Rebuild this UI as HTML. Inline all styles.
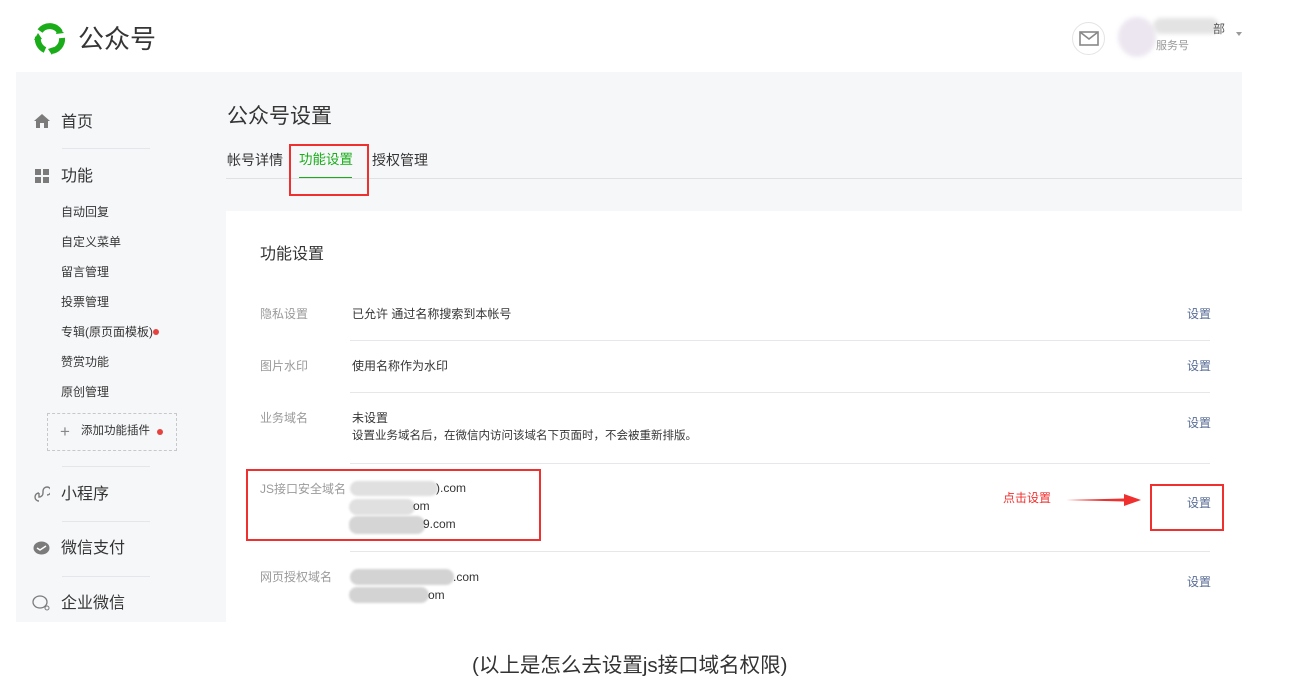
<!DOCTYPE html>
<html><head><meta charset="utf-8">
<style>
*{margin:0;padding:0;box-sizing:border-box}
body{width:1299px;height:683px;background:#fff;position:relative;overflow:hidden;font-family:"Liberation Sans","Noto Sans CJK SC",sans-serif;color:#353535;line-height:1.2}
.a{position:absolute}
.gray{left:16px;top:72px;width:1226px;height:550px;background:#f6f7f9}
.card{left:226px;top:211px;width:1016px;height:411px;background:#fff}
.nav{font-size:16px;color:#353535}
.sub{font-size:12px;color:#353535}
.sep{height:1px;background:#e4e6eb}
.lab{font-size:12px;color:#9a9a9a}
.val{font-size:12px;color:#353535}
.set{font-size:12px;color:#576b95}
.hl{height:1px;background:#e7e7eb;left:350px;width:860px}
.blob{background:#e0e0e0;border-radius:8px;filter:blur(1px)}
.red{border:2px solid #f0302e}
</style></head><body>
<svg class="a" style="left:31px;top:21px" width="38" height="36" viewBox="0 0 38 36">
<g fill="none" stroke="#1aad19" stroke-width="6">
<path d="M9 10A12 12 0 0 1 29 11"/>
<path d="M31 17A12 12 0 0 1 20 30"/>
<path d="M14 29A12 12 0 0 1 7 16"/>
</g>
<path d="M27 6l6 6-8 1z" fill="#1aad19"/>
<path d="M23 26l-2 8-4-6z" fill="#1aad19"/>
<path d="M3 19l4-7 4 6z" fill="#1aad19"/>
</svg>
<div class="a" style="left:78px;top:24px;font-size:26px;color:#353535">公众号</div>
<div class="a" style="left:1072px;top:22px;width:33px;height:33px;border:1px solid #e4e4e4;border-radius:50%"></div>
<svg class="a" style="left:1079px;top:31px" width="20" height="15"><rect x="1" y="1" width="18" height="13" fill="none" stroke="#888" stroke-width="1.6"/><path d="M1 1l9 7 9-7" fill="none" stroke="#888" stroke-width="1.6"/></svg>
<div class="a" style="left:1118px;top:17px;width:38px;height:40px;border-radius:50%;background:#ece6f0;filter:blur(2px)"></div>
<div class="a" style="left:1153px;top:18px;width:66px;height:16px;background:#e3e3e3;border-radius:8px;filter:blur(2px)"></div>
<div class="a" style="left:1213px;top:22px;font-size:12px;color:#555">部</div>
<div class="a" style="left:1156px;top:40px;font-size:11px;color:#999">服务号</div>
<div class="a" style="left:1236px;top:32px;border:3px solid transparent;border-top:4px solid #999"></div>

<div class="a gray"></div>
<svg class="a" style="left:33px;top:113px" width="18" height="16"><path d="M9 1L1 8h2v7h4v-5h4v5h4V8h2z" fill="#7b7b7b"/></svg>
<div class="a nav" style="left:61px;top:113px">首页</div>
<div class="a sep" style="top:148px;left:62px;width:88px"></div>
<svg class="a" style="left:34px;top:168px" width="16" height="16"><rect x="1" y="1" width="6" height="6" fill="#7b7b7b"/><rect x="9" y="1" width="6" height="6" fill="#7b7b7b"/><rect x="1" y="9" width="6" height="6" fill="#7b7b7b"/><rect x="9" y="9" width="6" height="6" fill="#7b7b7b"/></svg>
<div class="a nav" style="left:61px;top:167px">功能</div>
<div class="a sub" style="left:61px;top:205px">自动回复</div>
<div class="a sub" style="left:61px;top:235px">自定义菜单</div>
<div class="a sub" style="left:61px;top:265px">留言管理</div>
<div class="a sub" style="left:61px;top:295px">投票管理</div>
<div class="a sub" style="left:61px;top:325px">专辑(原页面模板)</div>
<div class="a" style="left:153px;top:329px;width:6px;height:6px;border-radius:50%;background:#e64340"></div>
<div class="a sub" style="left:61px;top:355px">赞赏功能</div>
<div class="a sub" style="left:61px;top:385px">原创管理</div>
<div class="a" style="left:47px;top:413px;width:130px;height:38px;border:1px dashed #c8c8c8"></div>
<div class="a" style="left:60px;top:422px;font-size:17px;color:#888;font-weight:300">+</div>
<div class="a sub" style="left:81px;top:425px;font-size:11.5px">添加功能插件</div>
<div class="a" style="left:157px;top:429px;width:6px;height:6px;border-radius:50%;background:#e64340"></div>
<div class="a sep" style="top:466px;left:62px;width:88px"></div>
<svg class="a" style="left:33px;top:486px" width="17" height="16"><path d="M6 15a4 4 0 1 1 0-8M6 7v4a4 4 0 0 0 4-4V5a4 4 0 1 1 4 4" fill="none" stroke="#7b7b7b" stroke-width="1.4"/></svg>
<div class="a nav" style="left:61px;top:485px">小程序</div>
<div class="a sep" style="top:521px;left:62px;width:88px"></div>
<svg class="a" style="left:33px;top:541px" width="17" height="14"><ellipse cx="8.5" cy="7" rx="8" ry="6.5" fill="#7b7b7b"/><path d="M4 7l3 2 6-4" fill="none" stroke="#fff" stroke-width="1.5"/></svg>
<div class="a nav" style="left:61px;top:539px">微信支付</div>
<div class="a sep" style="top:576px;left:62px;width:88px"></div>
<svg class="a" style="left:32px;top:595px" width="19" height="16"><ellipse cx="8" cy="7" rx="7" ry="6" fill="none" stroke="#7b7b7b" stroke-width="1.3"/><circle cx="15" cy="13" r="2" fill="none" stroke="#7b7b7b"/></svg>
<div class="a nav" style="left:61px;top:594px">企业微信</div>

<div class="a" style="left:227px;top:104px;font-size:21px;color:#353535">公众号设置</div>
<div class="a" style="left:227px;top:152px;font-size:14px">帐号详情</div>
<div class="a" style="left:299px;top:152px;font-size:13.5px;color:#1aad19">功能设置</div>
<div class="a" style="left:299px;top:177px;width:53px;height:2px;background:#1aad19"></div>
<div class="a" style="left:372px;top:152px;font-size:14px">授权管理</div>
<div class="a" style="left:226px;top:178px;width:1016px;height:1px;background:#e0e1e2"></div>
<div class="a red" style="left:289px;top:144px;width:80px;height:52px"></div>

<div class="a card"></div>
<div class="a" style="left:260px;top:245px;font-size:16px">功能设置</div>
<div class="a lab" style="left:260px;top:307px">隐私设置</div>
<div class="a val" style="left:352px;top:307px">已允许 通过名称搜索到本帐号</div>
<div class="a set" style="left:1187px;top:307px">设置</div>
<div class="a hl" style="top:340px"></div>
<div class="a lab" style="left:260px;top:359px">图片水印</div>
<div class="a val" style="left:352px;top:359px">使用名称作为水印</div>
<div class="a set" style="left:1187px;top:359px">设置</div>
<div class="a hl" style="top:392px"></div>
<div class="a lab" style="left:260px;top:411px">业务域名</div>
<div class="a val" style="left:352px;top:411px">未设置</div>
<div class="a val" style="left:352px;top:430px;font-size:11.5px">设置业务域名后，在微信内访问该域名下页面时，不会被重新排版。</div>
<div class="a set" style="left:1187px;top:416px">设置</div>
<div class="a hl" style="top:463px"></div>
<div class="a lab" style="left:260px;top:482px">JS接口安全域名</div>
<div class="a blob" style="left:350px;top:481px;width:88px;height:15px"></div>
<div class="a val" style="left:436px;top:481px">).com</div>
<div class="a blob" style="left:349px;top:499px;width:66px;height:16px"></div>
<div class="a val" style="left:413px;top:499px">om</div>
<div class="a blob" style="left:349px;top:516px;width:76px;height:18px;background:#d5d5d5"></div>
<div class="a val" style="left:423px;top:517px">9.com</div>
<div class="a red" style="left:246px;top:469px;width:295px;height:72px"></div>
<div class="a" style="left:1003px;top:491px;font-size:12px;color:#f0302e">点击设置</div>
<svg class="a" style="left:1066px;top:493px" width="76" height="14"><path d="M0 7l58-1.5V1l17 6-17 6V8.5z" fill="#f0302e"/></svg>
<div class="a red" style="left:1150px;top:484px;width:74px;height:47px"></div>
<div class="a set" style="left:1187px;top:496px">设置</div>
<div class="a hl" style="top:551px"></div>
<div class="a lab" style="left:260px;top:570px">网页授权域名</div>
<div class="a blob" style="left:350px;top:569px;width:104px;height:16px;background:#d3d3d3"></div>
<div class="a val" style="left:453px;top:570px">.com</div>
<div class="a blob" style="left:349px;top:587px;width:80px;height:16px;background:#d3d3d3"></div>
<div class="a val" style="left:428px;top:588px">om</div>
<div class="a set" style="left:1187px;top:575px">设置</div>

<div class="a" style="left:472px;top:654px;font-size:20.5px;color:#333">(以上是怎么去设置js接口域名权限)</div>
</body></html>
